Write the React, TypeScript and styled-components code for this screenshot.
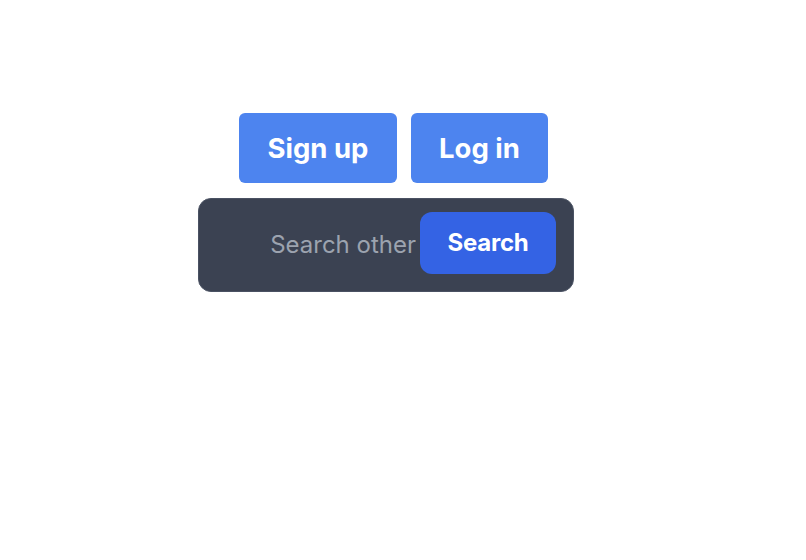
import React from "react";
import styled, { createGlobalStyle } from "styled-components";

const GlobalStyle = createGlobalStyle`
  html, body {
    margin: 0;
    padding: 0;
    background: #ffffff;
    font-family: Inter, "Noto Sans", "Liberation Sans", sans-serif;
  }
  * { box-sizing: border-box; }
`;

const Page = styled.main`
  display: flex;
  flex-direction: column;
  align-items: flex-start;
  gap: 15px;
  padding: 113px 0 0 198px;
`;

const ButtonRow = styled.div`
  display: flex;
  gap: 14px;
  margin-left: 41px;
`;

const AuthButton = styled.button<{ $w: number }>`
  width: ${(p) => p.$w}px;
  height: 70px;
  border: none;
  border-radius: 6px;
  background: #4d84ef;
  color: #ffffff;
  font-family: Inter, "Noto Sans", "Liberation Sans", sans-serif;
  font-weight: 700;
  font-size: 27.5px;
  letter-spacing: 0;
  display: flex;
  align-items: center;
  justify-content: center;
  padding: 0 0 1px;
  cursor: pointer;
`;

const SearchBar = styled.form`
  width: 376px;
  height: 94px;
  display: flex;
  align-items: flex-start;
  background: #3b4252;
  border: 1px solid #4a5263;
  border-radius: 13px;
  padding: 13px 17px 17px 0;
`;

const SearchInput = styled.input`
  flex: 1;
  min-width: 0;
  align-self: center;
  height: 40px;
  margin-top: 2px;
  background: transparent;
  border: none;
  outline: none;
  color: #e5e7eb;
  font-family: Inter, "Noto Sans", "Liberation Sans", sans-serif;
  font-size: 24px;
  text-align: right;
  padding: 0 4px 0 0;
  &::placeholder {
    color: #9ca3af;
  }
`;

const SearchButton = styled.button`
  width: 136px;
  height: 62px;
  border: none;
  border-radius: 12px;
  background: #3463e4;
  color: #ffffff;
  font-family: Inter, "Noto Sans", "Liberation Sans", sans-serif;
  font-weight: 700;
  font-size: 24px;
  letter-spacing: -0.2px;
  display: flex;
  align-items: center;
  justify-content: center;
  padding: 0 0 1px;
  cursor: pointer;
`;

export default function App() {
  return (
    <>
      <GlobalStyle />
      <Page>
        <ButtonRow>
          <AuthButton $w={158}>Sign up</AuthButton>
          <AuthButton $w={137}>Log in</AuthButton>
        </ButtonRow>
        <SearchBar onSubmit={(e) => e.preventDefault()}>
          <SearchInput placeholder="Search other" />
          <SearchButton type="submit">Search</SearchButton>
        </SearchBar>
      </Page>
    </>
  );
}
